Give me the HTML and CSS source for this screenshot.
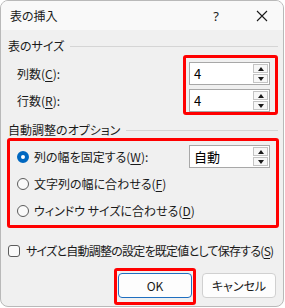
FILE: index.html
```html
<!DOCTYPE html>
<html lang="ja">
<head>
    <meta charset="UTF-8">
    <meta name="viewport" content="width=device-width, initial-scale=1.0">
    <title>表の挿入</title>
    <link rel="stylesheet" href="styles.css">
</head>
<body>
    <div class="dialog">
        <div class="titlebar">
            <span class="title">表の挿入</span>
            <span class="help">?</span>
            <span class="close">
                <svg width="12" height="12" viewBox="0 0 12 12">
                    <path d="M1 1 L11 11 M11 1 L1 11" stroke="#1a1a1a" stroke-width="1.1" fill="none"/>
                </svg>
            </span>
        </div>
        <div class="content">
            <div class="group-head"><span>表のサイズ</span><i class="rule"></i></div>
            <div class="size-section">
                <div class="labels">
                    <div class="label-row">列数(<u>C</u>):</div>
                    <div class="label-row">行数(<u>R</u>):</div>
                </div>
                <div class="mark mark-size">
                    <div class="spin">
                        <span class="spin-value">4</span>
                        <div class="spin-btns"><span class="arrow up"></span><span class="arrow down"></span></div>
                    </div>
                    <div class="spin">
                        <span class="spin-value">4</span>
                        <div class="spin-btns"><span class="arrow up"></span><span class="arrow down"></span></div>
                    </div>
                </div>
            </div>

            <div class="group-head"><span>自動調整のオプション</span><i class="rule"></i></div>
            <div class="mark mark-options">
                <div class="opt-row">
                    <span class="radio checked"></span>
                    <span class="opt-text">列の幅を固定する(<u>W</u>):</span>
                    <div class="spin spin-auto">
                        <span class="spin-value">自動</span>
                        <div class="spin-btns"><span class="arrow up"></span><span class="arrow down"></span></div>
                    </div>
                </div>
                <div class="opt-row">
                    <span class="radio"></span>
                    <span class="opt-text">文字列の幅に合わせる(<u>F</u>)</span>
                </div>
                <div class="opt-row">
                    <span class="radio"></span>
                    <span class="opt-text">ウィンドウ サイズに合わせる(<u>D</u>)</span>
                </div>
            </div>

            <div class="check-row">
                <span class="checkbox"></span>
                <span class="check-text">サイズと自動調整の設定を既定値として保存する(<u>S</u>)</span>
            </div>

            <div class="buttons">
                <div class="mark mark-ok"><button class="btn btn-default">OK</button></div>
                <button class="btn">キャンセル</button>
            </div>
        </div>
    </div>
</body>
</html>
```

FILE: styles.css
```css
body {
    margin: 0;
    background: #ffffff;
    font-family: "Noto Sans CJK JP", "Noto Sans", sans-serif;
    font-size: 12px;
    line-height: 16px;
    color: #1a1a1a;
    font-feature-settings: "palt";
}
u {
    text-decoration-thickness: 1px;
    text-underline-offset: 2px;
}
.dialog {
    width: 284px;
    height: 307px;
    box-sizing: border-box;
    border: 1px solid #b9b9b9;
    border-radius: 8px;
    overflow: hidden;
    display: flex;
    flex-direction: column;
    background: #f0f0f0;
}
.titlebar {
    height: 29px;
    flex: none;
    display: flex;
    align-items: center;
    background: #f9f9f9;
    padding-left: 9px;
}
.title {
    flex: 1;
}
.help {
    width: 14px;
    text-align: center;
    font-family: "Noto Sans", sans-serif;
    font-size: 13px;
    margin-right: 33px;
}
.close {
    display: flex;
    margin-right: 15px;
}
.content {
    display: flex;
    flex-direction: column;
    padding: 0 5px 0 6px;
}
.group-head {
    display: flex;
    align-items: center;
    height: 16px;
    margin-top: 8px;
    padding-left: 1px;
}
.group-head .rule {
    flex: 1;
    height: 1px;
    background: #d5d5d5;
    margin-left: 6px;
}
.size-section {
    display: flex;
    justify-content: space-between;
    margin-top: 1px;
}
.labels {
    display: flex;
    flex-direction: column;
    gap: 4px;
    padding: 7px 0 0 10px;
}
.label-row {
    height: 23px;
    display: flex;
    align-items: center;
}
.mark {
    border: 3px solid #ff0000;
    border-radius: 3px;
}
.mark-size {
    width: 95px;
    height: 60px;
    box-sizing: border-box;
    display: flex;
    flex-direction: column;
    gap: 4px;
    padding: 4px 5px 0 3px;
}
.spin {
    width: 81px;
    height: 23px;
    box-sizing: border-box;
    border: 1px solid #a8a8a8;
    background: #ffffff;
    display: flex;
    align-items: center;
    justify-content: space-between;
    padding: 0 1px 0 4px;
}
.spin-value {
    font-size: 13px;
    color: #000;
}
.spin-btns {
    width: 15px;
    height: 19px;
    display: flex;
    flex-direction: column;
    gap: 1px;
}
.arrow {
    flex: 1;
    border: 1px solid #c4c4c4;
    background: #f7f7f7;
    display: flex;
    align-items: center;
    justify-content: center;
}
.arrow::after {
    content: "";
    border-left: 3px solid transparent;
    border-right: 3px solid transparent;
}
.arrow.up::after {
    border-bottom: 4px solid #1a1a1a;
}
.arrow.down::after {
    border-top: 4px solid #1a1a1a;
}
.size-section + .group-head {
    margin-top: 7px;
}
.mark-options {
    margin-right: -1px;
    height: 90px;
    box-sizing: border-box;
    padding: 2px 6px 0 7px;
    display: flex;
    flex-direction: column;
}
.opt-row {
    height: 27px;
    display: flex;
    align-items: center;
}
.opt-row:last-child {
    height: 28px;
}
.opt-text {
    flex: 1;
}
.radio {
    width: 12px;
    height: 12px;
    box-sizing: border-box;
    border: 1px solid #5c5c5c;
    border-radius: 50%;
    background: #fafafa;
    margin-right: 5px;
    flex: none;
}
.radio.checked {
    border: 4px solid #0067c0;
    background: #ffffff;
}
.check-row {
    display: flex;
    align-items: center;
    height: 16px;
    margin-top: 15px;
    padding-left: 1px;
    white-space: nowrap;
}
.check-text {
    letter-spacing: -0.75px;
}
.checkbox {
    width: 12px;
    height: 12px;
    flex: none;
    box-sizing: border-box;
    border: 1px solid #5c5c5c;
    border-radius: 3px;
    background: #fafafa;
    margin-right: 6px;
}
.buttons {
    display: flex;
    justify-content: flex-end;
    align-items: flex-start;
    gap: 6px;
    margin-top: 9px;
    margin-right: 2px;
}
.mark-ok {
    padding: 2px 1px 4px 1px;
}
.btn {
    width: 74px;
    height: 25px;
    border: 1px solid #d0d0d0;
    border-radius: 4px;
    background: #fdfdfd;
    font-family: inherit;
    font-size: 12px;
    color: #1a1a1a;
    padding: 0;
    margin-top: 5px;
    font-feature-settings: "palt";
}
.btn-default {
    display: block;
    border-color: #1f6fc0;
    margin-top: 0;
}
```
